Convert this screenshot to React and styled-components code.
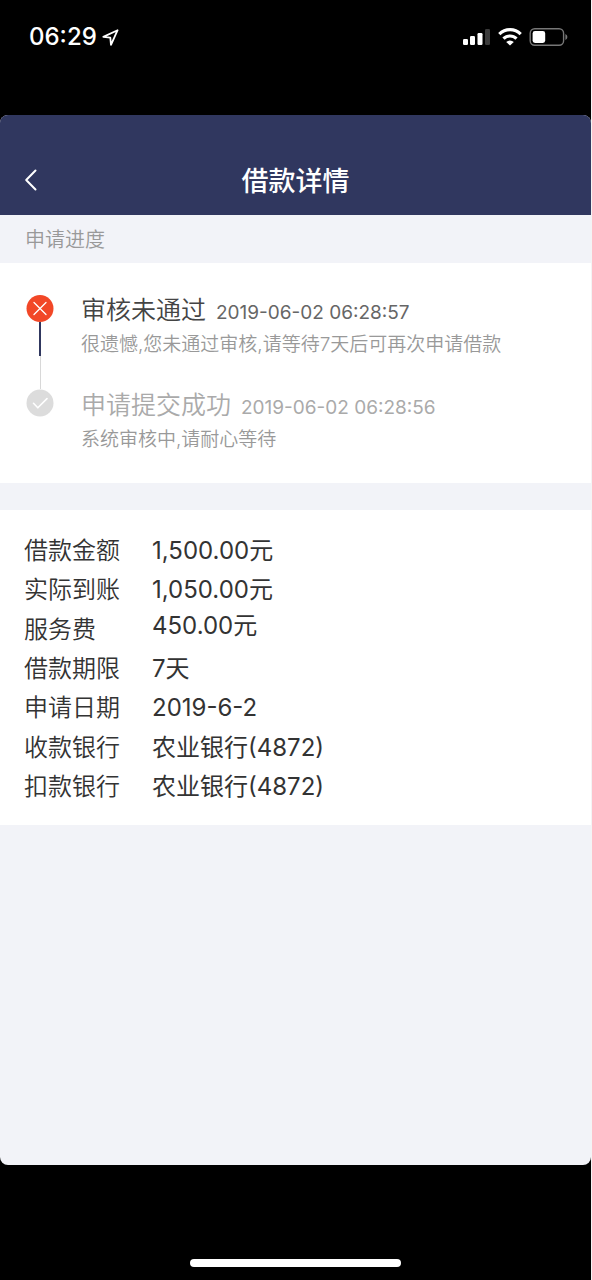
import React from "react";
import styled, { createGlobalStyle } from "styled-components";

const GlobalStyle = createGlobalStyle`
  *, *::before, *::after { box-sizing: border-box; }
  body {
    margin: 0;
    background: #f4f4f4;
    font-family: Inter, "Noto Sans CJK SC", sans-serif;
    color: #333;
  }
  h1, h2, h3, p, dl, dd, ol { margin: 0; padding: 0; font-weight: 400; }
`;

const Screen = styled.div`
  display: flex;
  flex-direction: column;
  min-height: 100vh;
  margin-right: 1px;
  background: #000;
`;

const StatusBar = styled.div`
  display: flex;
  justify-content: space-between;
  align-items: flex-start;
  height: 115px;
  padding: 21px 23px 0 29px;
  color: #fff;
`;

const StatusGroup = styled.div`
  display: flex;
  align-items: center;
  gap: ${(p) => p.$gap}px;
  height: 32px;
`;

const Clock = styled.span`
  font-size: 24px;
  line-height: 32px;
  font-weight: 500;
`;

const Page = styled.main`
  flex: 1;
  display: flex;
  flex-direction: column;
  overflow: hidden;
  border-radius: 8px;
  background: #f2f3f8;
`;

const NavBar = styled.header`
  display: grid;
  grid-template-columns: 60px 1fr 60px;
  align-items: end;
  height: 100px;
  padding-bottom: 15px;
  background: #30375f;
  color: #fff;
`;

const BackButton = styled.button`
  display: flex;
  align-items: center;
  height: 40px;
  padding: 0 0 0 24px;
  border: 0;
  background: none;
  color: inherit;
`;

const Title = styled.h1`
  font-size: 27px;
  line-height: 36px;
  font-weight: 500;
  text-align: center;
`;

const SectionTitle = styled.h2`
  padding: 2px 25px 0;
  font-size: 20px;
  line-height: 46px;
  font-weight: 350;
  color: #999;
`;

const Timeline = styled.ol`
  padding: 31px 24px 27px;
  list-style: none;
  background: #fff;
`;

const Step = styled.li`
  display: grid;
  grid-template-columns: 32px 1fr;
  column-gap: 25px;

  &:not(:last-child) {
    min-height: 95px;
  }
`;

const Track = styled.div`
  display: flex;
  flex-direction: column;
  align-items: center;
`;

const Line = styled.span`
  flex: 1;
  width: ${(p) => (p.$active ? 2 : 1)}px;
  background: ${(p) => (p.$active ? "#30375f" : "#d8d8d8")};
`;

const StepTitle = styled.h3`
  display: flex;
  align-items: baseline;
  gap: 10px;
  font-size: 25px;
  line-height: 32px;
  font-weight: 350;
  color: ${(p) => (p.$active ? "#444" : "#aaa")};
`;

const StepTime = styled.time`
  font-size: 19px;
  font-weight: 400;
  color: ${(p) => (p.$active ? "#666" : "#aaa")};
`;

const StepNote = styled.p`
  font-size: 19px;
  line-height: 32px;
  font-weight: 350;
  color: #999;
`;

const Details = styled.dl`
  display: grid;
  grid-auto-rows: 1fr;
  min-height: 315px;
  margin-top: 27px;
  padding: 21px 24px 18px;
  background: #fff;
`;

const DetailRow = styled.div`
  display: grid;
  grid-template-columns: 128px 1fr;
  align-items: center;
  font-size: 24px;
  line-height: 32px;
  font-weight: 350;
`;

const DetailValue = styled.dd`
  align-self: ${(p) => (p.$top ? "start" : "center")};
`;

const HomeArea = styled.div`
  display: flex;
  justify-content: center;
  align-items: flex-end;
  height: 115px;
  padding-bottom: 13px;
`;

const HomeIndicator = styled.span`
  width: 211px;
  height: 8px;
  border-radius: 4px;
  background: #fff;
`;

const LocationIcon = () => (
  <svg width="17" height="17" viewBox="0 0 17 17" fill="none" stroke="#fff" strokeWidth="1.8" strokeLinejoin="round" aria-hidden="true">
    <path d="M15.6 1.2 1.3 7.9l7 .8.7 7.2z" />
  </svg>
);

const SignalIcon = () => (
  <svg width="28" height="18" viewBox="0 0 28 18" fill="#fff" aria-hidden="true">
    <rect x="0" y="11" width="5" height="6" rx="1.2" />
    <rect x="7" y="8" width="5" height="9" rx="1.2" />
    <rect x="14.5" y="5" width="5" height="12" rx="1.2" />
    <rect x="22" y="1" width="5" height="16" rx="1.2" fill="#3a3a3a" />
  </svg>
);

const WifiIcon = () => (
  <svg width="24" height="18" viewBox="0 0 24 18" fill="none" stroke="#fff" strokeWidth="3.2" aria-hidden="true">
    <path d="M1.3 6.1a15.2 15.2 0 0 1 21.4 0" />
    <path d="M5.5 10.7a9.2 9.2 0 0 1 13 0" />
    <path d="M12 17.6 8.2 14a5.4 5.4 0 0 1 7.6 0z" fill="#fff" stroke="none" />
  </svg>
);

const BatteryIcon = () => (
  <svg width="39" height="18" viewBox="0 0 39 18" aria-hidden="true">
    <rect x="1.2" y="0.8" width="33.4" height="16.4" rx="4.5" fill="none" stroke="#777" strokeWidth="1.4" />
    <rect x="3.6" y="3" width="12.6" height="12" rx="2.4" fill="#fff" />
    <path d="M36.4 6q2 1 2 3t-2 3z" fill="#777" />
  </svg>
);

const BackIcon = () => (
  <svg width="14" height="22" viewBox="0 0 14 22" fill="none" stroke="currentColor" strokeWidth="2" strokeLinecap="round" strokeLinejoin="round" aria-hidden="true">
    <path d="M11.5 1.5 2.2 11l9.3 9.5" />
  </svg>
);

const RejectedIcon = () => (
  <svg width="28" height="28" viewBox="0 0 28 28" fill="none" aria-hidden="true">
    <circle cx="14" cy="14.5" r="13.5" fill="#f24727" />
    <path d="m8 8.5 12 12m0-12-12 12" stroke="#fff" strokeWidth="1.3" strokeLinecap="round" />
  </svg>
);

const DoneIcon = () => (
  <svg width="28" height="28" viewBox="0 0 28 28" fill="none" aria-hidden="true">
    <circle cx="14" cy="14" r="13.5" fill="#dcdcdc" />
    <path d="m7.5 14.3 4.3 4.5 9.2-9.2" stroke="#fff" strokeWidth="1.6" strokeLinecap="round" strokeLinejoin="round" />
  </svg>
);

const details = [
  { label: "借款金额", value: "1,500.00元" },
  { label: "实际到账", value: "1,050.00元" },
  { label: "服务费", value: "450.00元", top: true },
  { label: "借款期限", value: "7天" },
  { label: "申请日期", value: "2019-6-2" },
  { label: "收款银行", value: "农业银行(4872)" },
  { label: "扣款银行", value: "农业银行(4872)" },
];

export default function App() {
  return (
    <Screen lang="zh-CN">
      <GlobalStyle />
      <StatusBar>
        <StatusGroup $gap={5}>
          <Clock>06:29</Clock>
          <LocationIcon />
        </StatusGroup>
        <StatusGroup $gap={7}>
          <SignalIcon />
          <WifiIcon />
          <BatteryIcon />
        </StatusGroup>
      </StatusBar>
      <Page>
        <NavBar>
          <BackButton type="button" aria-label="返回">
            <BackIcon />
          </BackButton>
          <Title>借款详情</Title>
        </NavBar>
        <SectionTitle>申请进度</SectionTitle>
        <Timeline>
          <Step>
            <Track>
              <RejectedIcon />
              <Line $active />
              <Line />
            </Track>
            <div>
              <StepTitle $active>
                审核未通过 <StepTime $active>2019-06-02 06:28:57</StepTime>
              </StepTitle>
              <StepNote>很遗憾,您未通过审核,请等待7天后可再次申请借款</StepNote>
            </div>
          </Step>
          <Step>
            <Track>
              <DoneIcon />
            </Track>
            <div>
              <StepTitle>
                申请提交成功 <StepTime>2019-06-02 06:28:56</StepTime>
              </StepTitle>
              <StepNote>系统审核中,请耐心等待</StepNote>
            </div>
          </Step>
        </Timeline>
        <Details>
          {details.map((row) => (
            <DetailRow key={row.label}>
              <dt>{row.label}</dt>
              <DetailValue $top={row.top}>{row.value}</DetailValue>
            </DetailRow>
          ))}
        </Details>
      </Page>
      <HomeArea>
        <HomeIndicator />
      </HomeArea>
    </Screen>
  );
}
